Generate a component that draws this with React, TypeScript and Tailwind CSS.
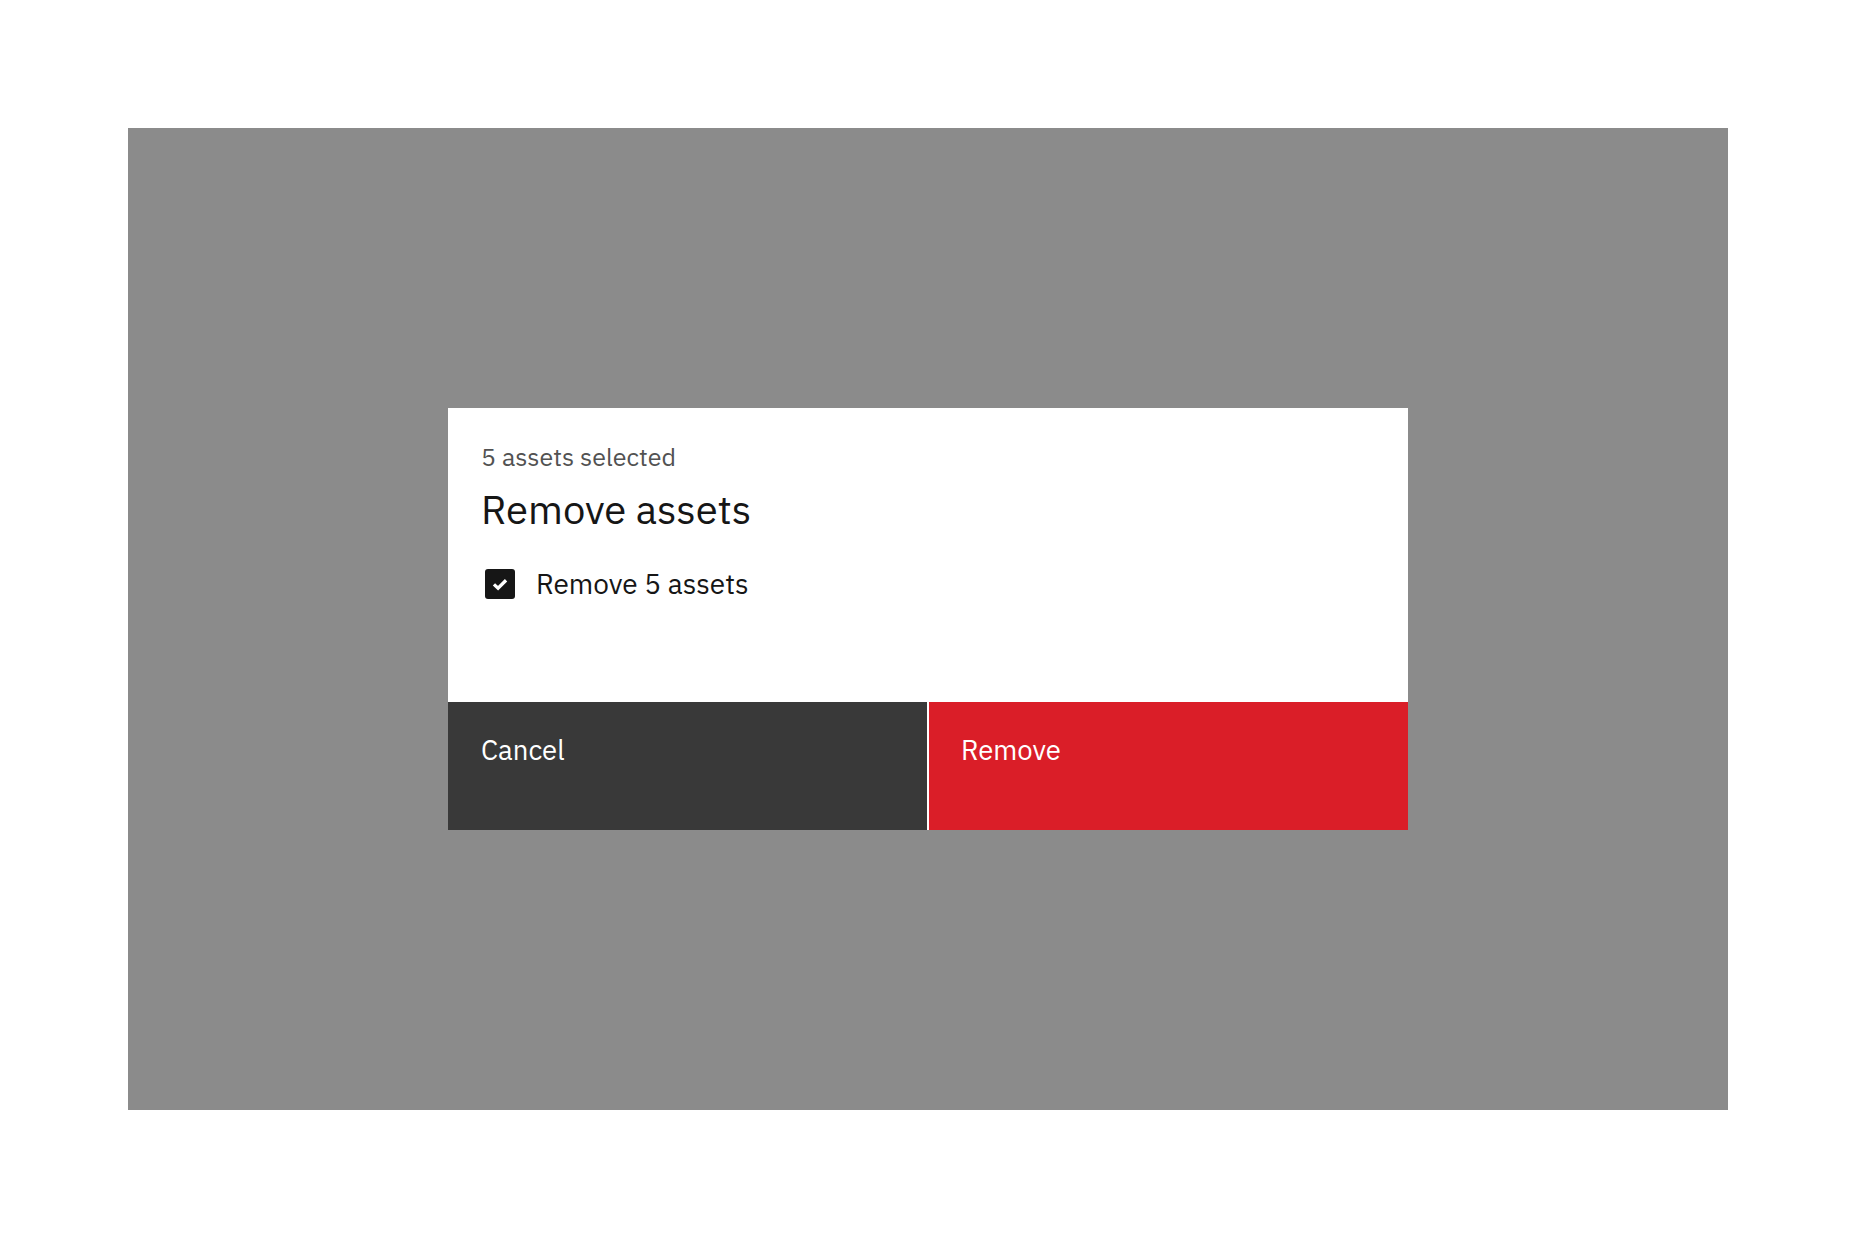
export default function App() {
  return (
    <div
      className="w-[1856px] h-[1238px] bg-white flex items-center justify-center"
      style={{ fontFamily: '"IBM Plex Sans", Inter, "Noto Sans", sans-serif' }}
    >
      <div className="w-[1600px] h-[982px] bg-[#8b8b8b] flex items-center justify-center">
        <div className="w-[960px] bg-white flex flex-col">
          <div className="h-[294px] pl-[33px] pt-[31px]">
            <div className="text-[25px] leading-[36px] text-[#525252]">5 assets selected</div>
            <div className="mt-[9px] text-[40px] leading-[50px] text-[#161616]">Remove assets</div>
            <label className="mt-[32px] flex items-center gap-[21px] pl-[4px]">
              <span className="w-[30px] h-[30px] rounded-[3px] bg-[#161616] flex items-center justify-center">
                <svg width="22" height="22" viewBox="0 0 16 16" fill="none">
                  <path d="M3.6 8.3 L6.6 11.1 L12.4 5.3" stroke="white" strokeWidth="2.4" />
                </svg>
              </span>
              <span className="text-[28px] leading-[36px] text-[#161616]">Remove 5 assets</span>
            </label>
          </div>
          <div className="h-[128px] grid grid-cols-2 gap-[2px]">
            <button className="bg-[#393939] text-white text-left pl-[33px] pt-[30px] flex items-start text-[27.5px] leading-[36px]">
              Cancel
            </button>
            <button className="bg-[#da1e28] text-white text-left pl-[32px] pt-[30px] flex items-start text-[27.5px] leading-[36px]">
              Remove
            </button>
          </div>
        </div>
      </div>
    </div>
  );
}
